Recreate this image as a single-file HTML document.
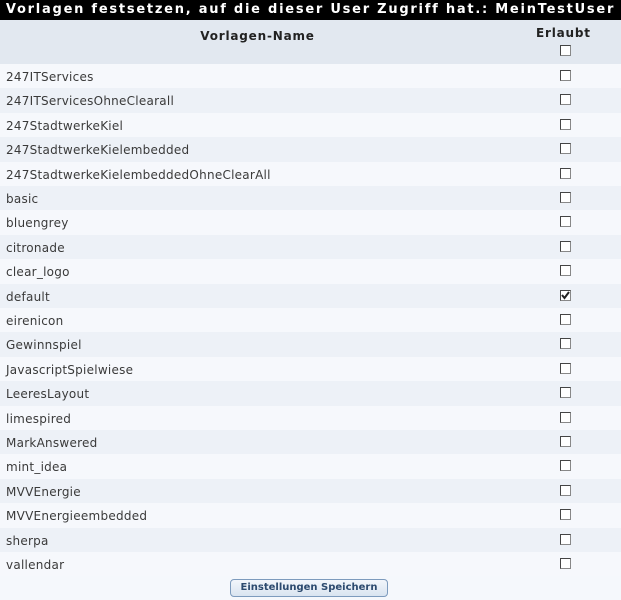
<!DOCTYPE html>
<html><head><meta charset="utf-8"><style>
*{margin:0;padding:0;box-sizing:border-box}
body{width:621px;height:600px;background:#f5f8fc;font-family:"DejaVu Sans","Liberation Sans",sans-serif;font-size:12px;letter-spacing:0.25px;color:#222;position:relative;overflow:hidden}
.title{position:absolute;left:0;top:0;width:621px;height:20px;background:#000;color:#fff;font-weight:bold;text-align:center;line-height:20px;font-size:13px;letter-spacing:1.75px;white-space:nowrap}
.hdr{position:absolute;left:0;top:20px;width:621px;height:44px;background:#e2e8f0;font-weight:bold;font-size:12px;letter-spacing:0.8px}
.hdr .n{position:absolute;left:0;width:515px;text-align:center;top:9px}
.hdr .e{position:absolute;left:536px;top:6px}
.cb{position:absolute;width:11px;height:11px;background:#fff;border:1px solid #888;border-top-color:#444;border-left-color:#444}
.row{position:absolute;left:0;width:621px;height:24.4px}
.row span{position:absolute;left:6px;top:6px;color:#3a3a3a}
.row .cb{left:560px;top:6px}
.btn{position:absolute;left:230px;top:579px;width:158px;height:18px;border:1px solid #7d9bbd;border-radius:4px;background:linear-gradient(#f2f6fb,#d9e4f0);color:#2c4a6e;font-weight:bold;font-size:10px;letter-spacing:0;text-align:center;line-height:16px}
</style></head><body>
<div class="title">Vorlagen festsetzen, auf die dieser User Zugriff hat.: MeinTestUser</div>
<div class="hdr"><div class="n">Vorlagen-Name</div><div class="e">Erlaubt</div><div class="cb" style="left:560px;top:25px"></div></div>
<div id="rows"></div>
<script>
var names=["247ITServices","247ITServicesOhneClearall","247StadtwerkeKiel","247StadtwerkeKielembedded","247StadtwerkeKielembeddedOhneClearAll","basic","bluengrey","citronade","clear_logo","default","eirenicon","Gewinnspiel","JavascriptSpielwiese","LeeresLayout","limespired","MarkAnswered","mint_idea","MVVEnergie","MVVEnergieembedded","sherpa","vallendar"];
var h="";
names.forEach(function(n,i){
 var top=64+i*24.4;
 var bg=i%2==0?"#f6f8fc":"#edf1f7";
 var chk=n=="default"?'<svg width="9" height="9" style="position:absolute;left:0;top:0"><path d="M1 4 L3.5 7 L8 1" stroke="#222" stroke-width="2" fill="none"/></svg>':'';
 h+='<div class="row" style="top:'+top+'px;background:'+bg+'"><span>'+n+'</span><div class="cb">'+chk+'</div></div>';
});
document.getElementById("rows").innerHTML=h;
</script>
<div class="btn">Einstellungen Speichern</div>
</body></html>
